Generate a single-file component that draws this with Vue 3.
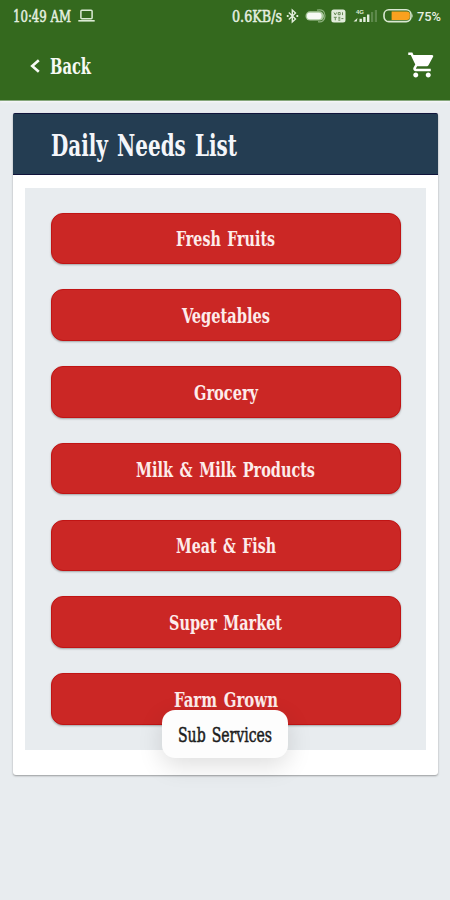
<script setup>
import { ref } from 'vue'

// width: drawn width of the label in the condensed face
const items = ref([
  { name: 'Fresh Fruits', width: 99 },
  { name: 'Vegetables', width: 88 },
  { name: 'Grocery', width: 64 },
  { name: 'Milk & Milk Products', width: 179 },
  { name: 'Meat & Fish', width: 100 },
  { name: 'Super Market', width: 113 },
  { name: 'Farm Grown', width: 104 },
])
const toast = ref('Sub Services')
</script>

<template>
  <div class="screen">
    <header class="header">
      <div class="status">
        <svg class="time" width="59" height="24"><text x="0" y="17.5" textLength="58" lengthAdjust="spacingAndGlyphs">10:49 AM</text></svg>
        <svg class="laptop" width="17" height="14" viewBox="0 0 17 14">
          <rect x="2.9" y="1.2" width="11.2" height="8.6" rx="1" fill="none" stroke="#dcebd5" stroke-width="1.5" />
          <path d="M0.3 11h16.4v1.6H0.3z" fill="#dcebd5" />
        </svg>
        <div class="status-right">
          <svg class="speed" width="51" height="24"><text x="0" y="17.5" textLength="50" lengthAdjust="spacingAndGlyphs">0.6KB/s</text></svg>
          <svg class="bluetooth" width="13" height="16" viewBox="0 0 13 16" fill="none" stroke="#e3eedd" stroke-width="1.4">
            <path d="M2.8 4.5 9.5 11 6.3 14V2l3.2 3L2.8 11.5" />
            <path d="M0.8 8h1.8M10.4 8h1.8" stroke-width="1.9" />
          </svg>
          <svg class="toggle" width="22" height="16" viewBox="0 0 22 16">
            <rect x="0.5" y="3.3" width="18.5" height="9.2" rx="4.6" fill="#a9c79c" />
            <rect x="2" y="4.7" width="14.5" height="6.5" rx="2.6" fill="#f7faf5" />
            <path d="M12 2.2c5-1.3 8 1 8 5.5s-3 7-7 6" fill="none" stroke="#8db17d" stroke-width="1.2" />
          </svg>
          <svg class="volte" width="15" height="14" viewBox="0 0 15 14">
            <rect x="0.3" y="0.5" width="14.2" height="13" rx="2.5" fill="#e2eddc" />
            <path d="M3 3.5l1.3 2.4 1.3-2.4M7.2 3.5h2v2.2h-2zM11.5 3.3v2.8M2.8 8.3h3M4.3 8.3v3M7.3 8.3h2M7.3 9.8h2M7.3 11.2h2M10.4 9.6h2" fill="none" stroke="#688b57" stroke-width="1" />
          </svg>
          <svg class="signal" width="25" height="16" viewBox="0 0 25 16">
            <text x="3" y="5.5" class="net">4G</text>
            <path d="M0.5 13.5h3.2l0.8-3.5zM6.5 10.8h2.4V14H6.5zM10.2 9h2.4v5h-2.4zM14 6.5h2.4V14H14z" fill="#e2eddc" />
            <path d="M18 4h2.2v10H18zM21.8 2H24v12h-2.2z" fill="#5d894b" />
          </svg>
          <svg class="battery" width="31" height="16" viewBox="0 0 31 16">
            <rect x="1" y="1.8" width="27" height="11.8" rx="4.8" fill="none" stroke="#d9e8d2" stroke-width="1.6" />
            <path d="M8.6 3.6h15.2q3 0 3 2.6v3q0 2.7-3 2.7H8.6z" fill="#f9a11f" />
            <path d="M29.2 5.3q1.2 2.4 0 4.8z" fill="#d9e8d2" />
          </svg>
          <svg class="percent" width="25" height="24"><text x="0" y="17" textLength="24" lengthAdjust="spacingAndGlyphs">75%</text></svg>
        </div>
      </div>
      <nav class="toolbar">
        <a class="back">
          <svg width="12" height="18" viewBox="0 0 12 18"><path d="M10.8 3.2 4.2 9l6.6 5.8" fill="none" stroke="#f7faf5" stroke-width="2.6" /></svg>
          <svg class="back-label" width="42" height="30"><text x="0" y="23" textLength="41" lengthAdjust="spacingAndGlyphs">Back</text></svg>
        </a>
        <svg class="cart" width="30" height="30" viewBox="0 0 24 24">
          <path fill="#fff" d="M7 18c-1.1 0-1.99.9-1.99 2S5.9 22 7 22s2-.9 2-2-.9-2-2-2zM1 2v2h2l3.6 7.59-1.35 2.45c-.16.28-.25.61-.25.96 0 1.1.9 2 2 2h12v-2H7.42c-.14 0-.25-.11-.25-.25l.03-.12.9-1.63h7.45c.75 0 1.41-.41 1.75-1.03l3.58-6.49A1 1 0 0 0 20.01 4H5.21l-.94-2H1zm16 16c-1.1 0-1.99.9-1.99 2s.89 2 1.99 2 2-.9 2-2-.9-2-2-2z" />
        </svg>
      </nav>
    </header>

    <main class="card">
      <h1 class="title">
        <svg width="187" height="40"><text x="0" y="31.5" textLength="186" lengthAdjust="spacingAndGlyphs">Daily Needs List</text></svg>
      </h1>
      <div class="list">
        <button v-for="item in items" :key="item.name" class="item">
          <svg :width="item.width" height="32"><text x="0" y="24" :textLength="item.width" lengthAdjust="spacingAndGlyphs">{{ item.name }}</text></svg>
        </button>
      </div>
    </main>

    <div class="toast">
      <svg width="94" height="32"><text x="0" y="23.5" textLength="94" lengthAdjust="spacingAndGlyphs">{{ toast }}</text></svg>
    </div>
  </div>
</template>

<style>
body {
  background: #e8ecef;
}
</style>

<style scoped>
.screen {
  position: relative;
  width: 450px;
  height: 900px;
  overflow: hidden;
  background: #e8ecef;
  font-family: "DejaVu Serif Condensed", "DejaVu Serif", serif;
  font-stretch: condensed;
}

svg {
  display: block;
  flex: none;
  overflow: visible;
}

.header {
  height: 100px;
  background: #34691e;
  border-bottom: 1px solid #86a77b;
  box-shadow: 0 1px 2px rgba(255, 255, 255, 0.7);
}

.status {
  display: flex;
  align-items: center;
  height: 32px;
  padding: 0 8px 0 13px;
}

.time text,
.speed text {
  font-size: 16px;
  fill: #e6f0e1;
  stroke: #e6f0e1;
  stroke-width: 0.5px;
}

.laptop {
  margin-left: 6px;
}

.status-right {
  display: flex;
  align-items: center;
  margin-left: auto;
}

.bluetooth {
  margin-left: 3px;
}

.toggle {
  margin-left: 6px;
}

.volte {
  margin-left: 4px;
}

.signal {
  margin-left: 7px;
}

.net {
  font: bold 6px "Liberation Sans", sans-serif;
  fill: #dcebd5;
}

.battery {
  margin-left: 5px;
}

.percent {
  margin-left: 3px;
}

.percent text {
  font: 500 13px Roboto, sans-serif;
  fill: #e6f0e1;
}

.toolbar {
  display: flex;
  align-items: center;
  justify-content: space-between;
  height: 68px;
  padding: 0 13px 0 28px;
}

.back {
  display: flex;
  align-items: center;
  gap: 10px;
}

.back-label text {
  font-size: 22px;
  font-weight: bold;
  fill: #f7faf5;
}

.cart {
  margin-top: -2px;
}

.card {
  width: 425px;
  margin: 12px 0 0 13px;
  padding-bottom: 25px;
  background: #fff;
  border-radius: 3px;
  box-shadow: 0 1px 2px rgba(0, 0, 0, 0.35);
}

.title {
  box-sizing: border-box;
  display: flex;
  align-items: center;
  height: 62px;
  margin: 0 0 13px;
  padding-left: 38px;
  background: #243d52;
  border-top: 1px solid #10143b;
  border-bottom: 1px solid #10143b;
  border-radius: 2px 2px 0 0;
}

.title text {
  font-size: 29.5px;
  font-weight: bold;
  word-spacing: 3px;
  fill: #f4f6fa;
}

.list {
  display: flex;
  flex-direction: column;
  gap: 25.3px;
  margin: 0 12px;
  padding: 24.5px 25.5px 25px;
  background: #e8ecef;
}

.item {
  display: flex;
  align-items: center;
  justify-content: center;
  height: 51.5px;
  padding: 0;
  border: 1px solid #c01414;
  box-sizing: border-box;
  border-radius: 12px;
  background: #cb2725;
  box-shadow: 0 1px 2px rgba(0, 0, 0, 0.3);
  font-family: inherit;
}

.item text {
  font-size: 21px;
  font-weight: bold;
  word-spacing: 2px;
  fill: #fdeceb;
}

/* floats over the list */
.toast {
  position: absolute;
  left: 162px;
  top: 709.5px;
  width: 126px;
  height: 48.5px;
  display: flex;
  align-items: center;
  justify-content: center;
  border-radius: 13px;
  background: #fdfdfd;
  box-shadow: 0 8px 24px rgba(0, 0, 0, 0.13);
}

.toast text {
  font-size: 20px;
  word-spacing: 2px;
  fill: #1c1c1c;
  stroke: #1c1c1c;
  stroke-width: 0.5px;
}
</style>
